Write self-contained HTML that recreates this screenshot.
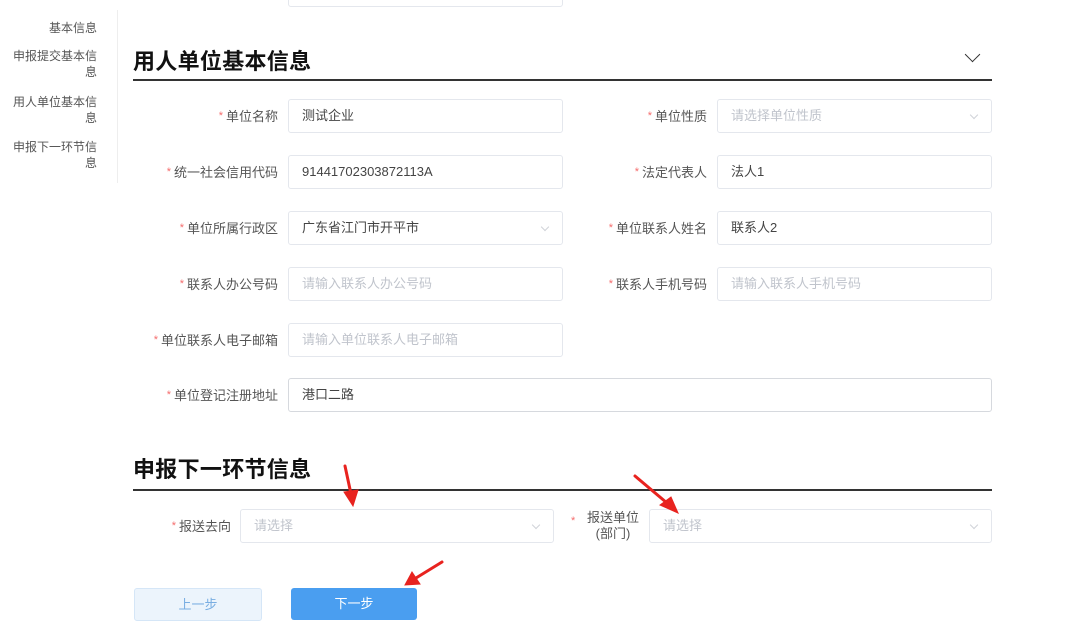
<!DOCTYPE html>
<html><head><meta charset="utf-8"><style>
*{margin:0;padding:0;box-sizing:border-box}
body{width:1080px;height:626px;overflow:hidden;background:#fff;position:relative;font-family:"Liberation Sans","Noto Sans CJK SC",sans-serif;font-size:13px;color:#555}
.a{position:absolute}
.side{right:983px;text-align:right;font-size:12px;color:#555;line-height:16px;width:90px}
.lbl{position:absolute;text-align:right;font-size:13px;color:#555;line-height:34px}
.lbl b{color:#f56c6c;font-weight:normal;font-size:11px;margin-right:3px;vertical-align:2px}
.in{position:absolute;height:34px;border:1px solid #e4e7ed;border-radius:3px;padding-left:13px;line-height:32px;font-size:13px;color:#444;background:#fff}
.ph{color:#c0c4cc}
.ar{position:absolute;right:14px;top:12px;width:6px;height:6px;border-right:1px solid #d0d3d8;border-bottom:1px solid #d0d3d8;transform:rotate(45deg)}
.h{position:absolute;left:133px;font-size:22px;font-weight:bold;color:#111;font-family:"Liberation Sans","Noto Sans CJK SC",sans-serif;letter-spacing:0.3px}
.line{position:absolute;left:133px;width:859px;height:2px;background:#333}
</style></head><body>
<div class="a" style="left:117px;top:10px;width:1px;height:173px;background:#eee"></div>
<div class="in" style="left:288px;top:-27px;width:275px"></div>
<div class="a side" style="top:20px">基本信息</div>
<div class="a side" style="top:48px">申报提交基本信<br>息</div>
<div class="a side" style="top:94px">用人单位基本信<br>息</div>
<div class="a side" style="top:139px">申报下一环节信<br>息</div>

<div class="h" style="top:44px">用人单位基本信息</div>
<div class="a" style="left:967px;top:49px;width:11px;height:11px;border-right:1.5px solid #333;border-bottom:1.5px solid #333;transform:rotate(45deg)"></div>
<div class="line" style="top:79px"></div>

<div class="lbl" style="left:140px;width:138px;top:99px"><b>*</b>单位名称</div>
<div class="in" style="left:288px;top:99px;width:275px">测试企业</div>
<div class="lbl" style="left:570px;width:137px;top:99px"><b>*</b>单位性质</div>
<div class="in ph" style="left:717px;top:99px;width:275px">请选择单位性质<i class="ar"></i></div>

<div class="lbl" style="left:140px;width:138px;top:155px"><b>*</b>统一社会信用代码</div>
<div class="in" style="left:288px;top:155px;width:275px">91441702303872113A</div>
<div class="lbl" style="left:570px;width:137px;top:155px"><b>*</b>法定代表人</div>
<div class="in" style="left:717px;top:155px;width:275px">法人1</div>

<div class="lbl" style="left:140px;width:138px;top:211px"><b>*</b>单位所属行政区</div>
<div class="in" style="left:288px;top:211px;width:275px">广东省江门市开平市<i class="ar"></i></div>
<div class="lbl" style="left:570px;width:137px;top:211px"><b>*</b>单位联系人姓名</div>
<div class="in" style="left:717px;top:211px;width:275px">联系人2</div>

<div class="lbl" style="left:140px;width:138px;top:267px"><b>*</b>联系人办公号码</div>
<div class="in ph" style="left:288px;top:267px;width:275px">请输入联系人办公号码</div>
<div class="lbl" style="left:570px;width:137px;top:267px"><b>*</b>联系人手机号码</div>
<div class="in ph" style="left:717px;top:267px;width:275px">请输入联系人手机号码</div>

<div class="lbl" style="left:140px;width:138px;top:323px"><b>*</b>单位联系人电子邮箱</div>
<div class="in ph" style="left:288px;top:323px;width:275px">请输入单位联系人电子邮箱</div>

<div class="lbl" style="left:140px;width:138px;top:378px"><b>*</b>单位登记注册地址</div>
<div class="in" style="left:288px;top:378px;width:704px;border-color:#d6d9de">港口二路</div>

<div class="h" style="top:452px">申报下一环节信息</div>
<div class="line" style="top:489px"></div>

<div class="lbl" style="left:120px;width:111px;top:509px"><b>*</b>报送去向</div>
<div class="in ph" style="left:240px;top:509px;width:314px">请选择<i class="ar"></i></div>
<div class="a" style="left:571px;top:515px;color:#f56c6c;font-size:11px">*</div>
<div class="a" style="left:583px;top:510px;width:60px;text-align:center;line-height:16px;font-size:13px;color:#555">报送单位<br>(部门)</div>
<div class="in ph" style="left:649px;top:509px;width:343px">请选择<i class="ar"></i></div>

<div class="a" style="left:134px;top:588px;width:128px;height:33px;background:#ecf4fc;border:1px solid #d5e6f7;border-radius:3px;color:#7aaee2;text-align:center;line-height:31px">上一步</div>
<div class="a" style="left:291px;top:588px;width:126px;height:32px;background:#4a9ef0;border-radius:3px;color:#fff;text-align:center;line-height:32px">下一步</div>

<svg class="a" style="left:0;top:0" width="1080" height="626">
<g fill="#e8231f" stroke="#e8231f" stroke-width="3" stroke-linecap="round">
<line x1="345" y1="466" x2="351" y2="494"/><polygon points="344,492 358,490 353,506" stroke-width="1"/>
<line x1="635" y1="476" x2="667" y2="503"/><polygon points="660,505 671,497 678,513" stroke-width="1"/>
<line x1="442" y1="562" x2="416" y2="578"/><polygon points="412,572 420,584 405,585" stroke-width="1"/>
</g></svg>
</body></html>
